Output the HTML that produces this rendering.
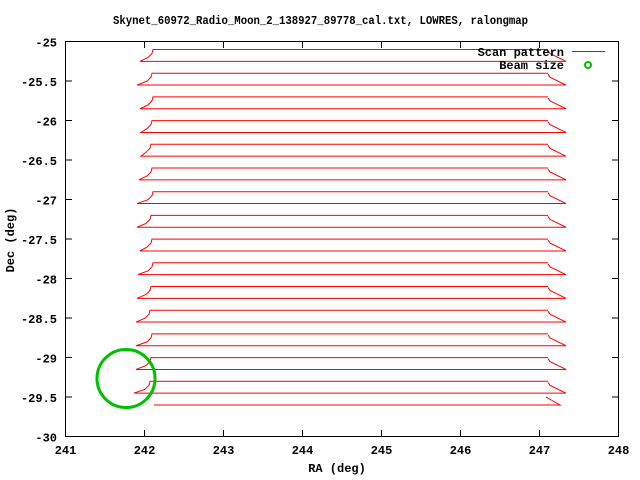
<!DOCTYPE html>
<html><head><style>body{margin:0;background:#fff}svg{display:block}text{font-family:"Liberation Mono",monospace;font-weight:bold;font-size:12px;fill:#000}</style></head><body>
<svg width="640" height="480" viewBox="0 0 640 480" xmlns="http://www.w3.org/2000/svg">
<text x="113" y="24" textLength="415" lengthAdjust="spacingAndGlyphs" font-size="11">Skynet_60972_Radio_Moon_2_138927_89778_cal.txt, LOWRES, ralongmap</text>
<rect x="65.5" y="41.5" width="553" height="395" fill="none" stroke="#000" stroke-width="1"/>
<g stroke="#000" stroke-width="1" id="ticks"></g>
<g id="labels"></g>
<g id="scan" fill="none" stroke="#f00" stroke-width="1"></g>
<circle cx="126" cy="378.5" r="29" fill="none" stroke="#00c000" stroke-width="3"/>
<text x="564" y="56" text-anchor="end">Scan pattern</text>
<line x1="572" y1="51.5" x2="605" y2="51.5" stroke="#f00"/>
<text x="564" y="69" text-anchor="end">Beam size</text>
<circle cx="588" cy="65" r="3" fill="none" stroke="#00c000" stroke-width="2"/>
<text x="337" y="472" text-anchor="middle">RA (deg)</text>
<text transform="translate(14,240) rotate(-90)" text-anchor="middle">Dec (deg)</text>
</svg>
<script>
var ns="http://www.w3.org/2000/svg";
function el(p,t,a,txt){var e=document.createElementNS(ns,t);for(var k in a)e.setAttribute(k,a[k]);if(txt)e.textContent=txt;document.getElementById(p).appendChild(e);}
for(var i=0;i<=7;i++){var x=65.5+i*79;el("ticks","line",{x1:x,y1:436,x2:x,y2:430});el("ticks","line",{x1:x,y1:42,x2:x,y2:48});el("labels","text",{x:x,y:454,"text-anchor":"middle"},String(241+i));}
for(var j=0;j<=10;j++){var y=41.5+j*39.5;el("ticks","line",{x1:66,y1:y,x2:72,y2:y});el("ticks","line",{x1:618,y1:y,x2:612,y2:y});var v=-25-j*0.5;el("labels","text",{x:57,y:y+5,"text-anchor":"end"},String(v));}
var lx=[153,152,153,152,151,152,153,151,152,153,151,150,152,151,150,152];
var l2=[140,137,140,141,141,139,137,137,140,138,137,136,136,136,134,154];
for(var p=0;p<16;p++){var y1=49.5+p*23.7,y2=y1+11.85;
 if(p<15){var L=lx[p],R=548;
 var d="M"+R+","+y1+" L"+L+","+y1+" L"+(L-1)+","+(y1+4)+" L"+(L-5)+","+(y1+8)+" L"+l2[p]+","+y2+" L566,"+y2+" L550,"+(y1+4)+" L"+R+","+(y1+1);
 el("scan","path",{d:d});}
 else{el("scan","path",{d:"M154,"+(y1)+" L560,"+y1+" L546,"+(y1-8)});}
}
</script>
</body></html>
